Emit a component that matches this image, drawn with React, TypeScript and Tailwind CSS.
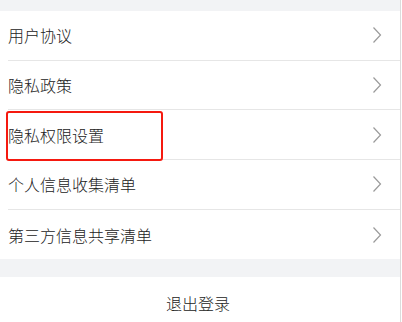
import React from 'react';

const items = ['用户协议', '隐私政策', '隐私权限设置', '个人信息收集清单', '第三方信息共享清单'];

const Chevron: React.FC = () => (
  <svg width="10" height="18" viewBox="0 0 10 18" fill="none" className="shrink-0">
    <path d="M1.5 1.5 L8.5 9 L1.5 16.5" stroke="#9a9a9a" strokeWidth="1.2" strokeLinejoin="miter" />
  </svg>
);

const App: React.FC = () => {
  return (
    <div
      className="flex w-[402px] h-[322px] overflow-hidden bg-white"
      style={{ fontFamily: '"Noto Sans CJK SC", "Noto Sans", sans-serif' }}
    >
      <div className="w-[400px] flex flex-col bg-[#f2f3f5]">
        <div className="h-[11px] shrink-0" />
        <div className="bg-white">
          {items.map((label, i) => (
            <div key={label} className="relative pl-[8px]">
              <div
                className={`flex items-center justify-between h-[49.7px] pr-[18px] ${
                  i < items.length - 1 ? 'border-b border-[#e6e6e6]' : ''
                }`}
              >
                <span className="text-[16px] font-light text-[#222] leading-none">{label}</span>
                <Chevron />
              </div>
              {i === 2 && (
                <div className="absolute left-[6px] top-[1px] w-[157px] h-[50px] border-2 border-[#f5190f] rounded-[3px]" />
              )}
            </div>
          ))}
        </div>
        <div className="h-[18px] shrink-0" />
        <div className="bg-white h-[52px] shrink-0 flex items-center justify-center">
          <span className="text-[16px] font-light text-[#222] leading-none -translate-x-[2px]">退出登录</span>
        </div>
      </div>
      <div className="w-px bg-[#dcdcdc]" />
      <div className="w-px bg-white" />
    </div>
  );
};

export default App;
